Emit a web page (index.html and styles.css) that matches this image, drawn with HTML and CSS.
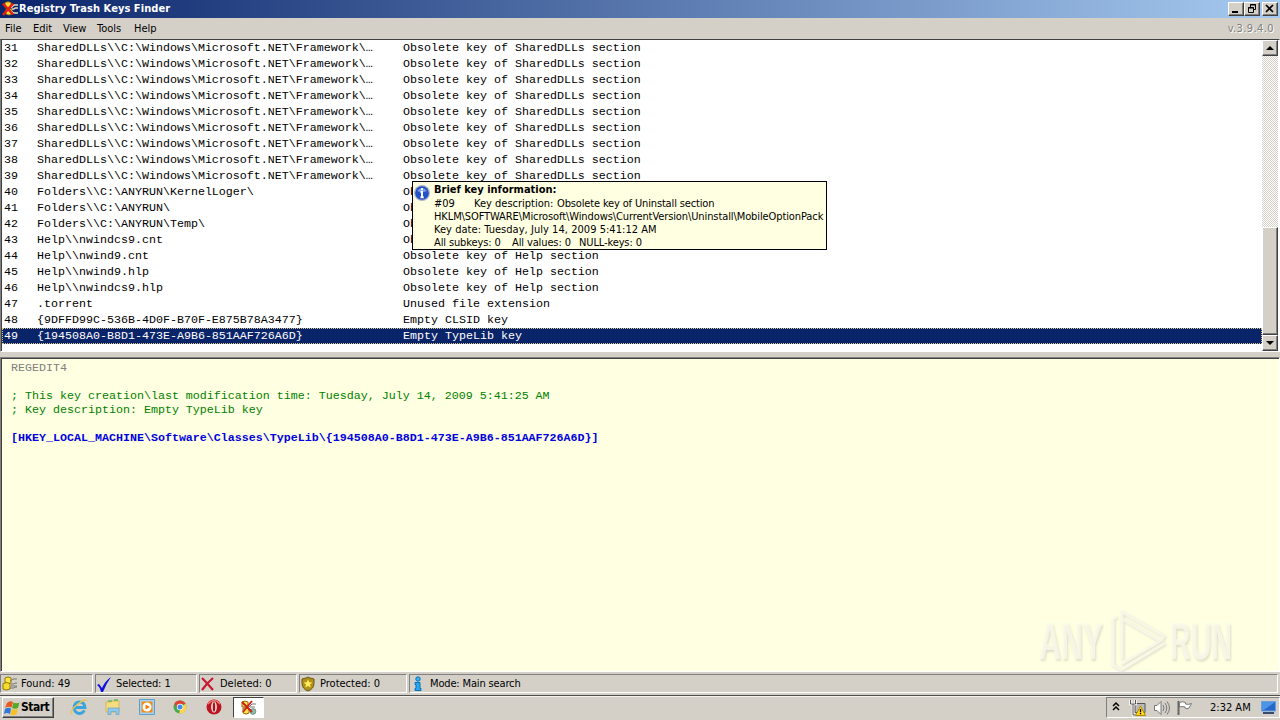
FILE: index.html
```html
<!DOCTYPE html>
<html lang="en">
<head>
<meta charset="utf-8">
<title>Registry Trash Keys Finder</title>
<link rel="stylesheet" href="styles.css">
</head>
<body>
<svg class="defs" width="0" height="0" aria-hidden="true">
  <symbol id="app" viewBox="0 0 16 16">
    <path d="M3 1.500q3-1.500 6 0v5H3zM4 8h6v5q-3 2-6 0z" fill="#ffd83c" stroke="#8a6800" stroke-width=".8"/>
    <path d="M9 7l3-3h4M10 8h2l1-1h3M9 10l3 2h4" fill="none" stroke="#e8dcc0" stroke-width="1.300"/>
    <path d="M1 2.500l10 11M11 2.500L1 14" stroke="#e02010" stroke-width="2.600"/>
  </symbol>
</svg>
<div class="window">
  <header class="titlebar">
    <svg class="app-icon" width="16" height="16"><use href="#app"/></svg>
    <h1 class="title">Registry Trash Keys Finder</h1>
    <div class="controls">
      <span class="ctl"><svg width="14" height="12"><path d="M3 9h6" stroke="#000" stroke-width="2"/></svg></span>
      <span class="ctl"><svg width="14" height="12"><path d="M5.500 4V1.500h5v5H9M5 2h6M3.500 4.500h5v5h-5zM3 5h6" fill="none" stroke="#000"/></svg></span>
      <span class="ctl ctl-close"><svg width="14" height="12"><path d="M3 2l7 7M10 2L3 9" stroke="#000" stroke-width="1.700"/></svg></span>
    </div>
  </header>
  <nav class="menu">
    <span class="m-file">File</span><span class="m-edit">Edit</span><span class="m-view">View</span><span class="m-tools">Tools</span><span class="m-help">Help</span>
    <span class="version">v.3.9.4.0</span>
  </nav>
  <main class="list">
    <div class="rows" id="rows">
      <div class="row"><span>31</span><span>SharedDLLs\\C:\Windows\Microsoft.NET\Framework\<i>…</i></span><span>Obsolete key of SharedDLLs section</span></div>
      <div class="row"><span>32</span><span>SharedDLLs\\C:\Windows\Microsoft.NET\Framework\<i>…</i></span><span>Obsolete key of SharedDLLs section</span></div>
      <div class="row"><span>33</span><span>SharedDLLs\\C:\Windows\Microsoft.NET\Framework\<i>…</i></span><span>Obsolete key of SharedDLLs section</span></div>
      <div class="row"><span>34</span><span>SharedDLLs\\C:\Windows\Microsoft.NET\Framework\<i>…</i></span><span>Obsolete key of SharedDLLs section</span></div>
      <div class="row"><span>35</span><span>SharedDLLs\\C:\Windows\Microsoft.NET\Framework\<i>…</i></span><span>Obsolete key of SharedDLLs section</span></div>
      <div class="row"><span>36</span><span>SharedDLLs\\C:\Windows\Microsoft.NET\Framework\<i>…</i></span><span>Obsolete key of SharedDLLs section</span></div>
      <div class="row"><span>37</span><span>SharedDLLs\\C:\Windows\Microsoft.NET\Framework\<i>…</i></span><span>Obsolete key of SharedDLLs section</span></div>
      <div class="row"><span>38</span><span>SharedDLLs\\C:\Windows\Microsoft.NET\Framework\<i>…</i></span><span>Obsolete key of SharedDLLs section</span></div>
      <div class="row"><span>39</span><span>SharedDLLs\\C:\Windows\Microsoft.NET\Framework\<i>…</i></span><span>Obsolete key of SharedDLLs section</span></div>
      <div class="row"><span>40</span><span>Folders\\C:\ANYRUN\KernelLoger\</span><span>Ob</span></div>
      <div class="row"><span>41</span><span>Folders\\C:\ANYRUN\</span><span>Ob</span></div>
      <div class="row"><span>42</span><span>Folders\\C:\ANYRUN\Temp\</span><span>Ob</span></div>
      <div class="row"><span>43</span><span>Help\\nwindcs9.cnt</span><span>Ob</span></div>
      <div class="row"><span>44</span><span>Help\\nwind9.cnt</span><span>Obsolete key of Help section</span></div>
      <div class="row"><span>45</span><span>Help\\nwind9.hlp</span><span>Obsolete key of Help section</span></div>
      <div class="row"><span>46</span><span>Help\\nwindcs9.hlp</span><span>Obsolete key of Help section</span></div>
      <div class="row"><span>47</span><span>.torrent</span><span>Unused file extension</span></div>
      <div class="row"><span>48</span><span>{9DFFD99C-536B-4D0F-B70F-E875B78A3477}</span><span>Empty CLSID key</span></div>
      <div class="row selected"><span>49</span><span>{194508A0-B8D1-473E-A9B6-851AAF726A6D}</span><span>Empty TypeLib key</span></div>
    </div>
    <div class="scrollbar">
      <span class="sbtn"><svg width="12" height="12"><path d="M2 8h8L6 4z"/></svg></span>
      <span class="track"></span>
      <span class="thumb"></span>
      <span class="sbtn"><svg width="12" height="12"><path d="M2 4h8L6 8z"/></svg></span>
    </div>
    <aside class="tooltip">
      <svg class="tip-icon" width="16" height="16"><circle cx="8" cy="8" r="8" fill="#a9b4c4"/><circle cx="8" cy="8" r="6.800" fill="#2450c8"/><path d="M3 6q5-6 10 0-5 2-10 0" fill="#7ba0ee"/><path d="M8 3v2.200M6.500 7H8v5M6.500 12.300h3.200" stroke="#fff" stroke-width="1.900" fill="none"/></svg>
      <div class="tip-text">
        <b class="t1">Brief key information:</b>
        <p class="t2"><span class="t2a">#09</span><span class="t2b">Key description:</span><span class="t2c">Obsolete key of Uninstall section</span></p>
        <p class="t3">HKLM\SOFTWARE\Microsoft\Windows\CurrentVersion\Uninstall\MobileOptionPack</p>
        <p class="t4">Key date: Tuesday, July 14, 2009 5:41:12 AM</p>
        <p class="t5"><span class="t5a">All subkeys: 0</span><span class="t5b">All values: 0</span><span>NULL-keys: 0</span></p>
      </div>
    </aside>
  </main>
  <section class="memo">
<pre><span class="gray">REGEDIT4</span>

<span class="green">; This key creation\last modification time: Tuesday, July 14, 2009 5:41:25 AM
; Key description: Empty TypeLib key</span>

<span class="blue">[HKEY_LOCAL_MACHINE\Software\Classes\TypeLib\{194508A0-B8D1-473E-A9B6-851AAF726A6D}]</span></pre>
    <svg class="watermark" width="200" height="64" viewBox="0 0 200 64">
      <g class="wm-shadow"><text x="3" y="53" textLength="64" lengthAdjust="spacingAndGlyphs">ANY</text><text x="134" y="53" textLength="62" lengthAdjust="spacingAndGlyphs">RUN</text><path d="M81 10l-4 2v46l8 5 44-27M86 52V5l42 24-3 5M86 12l38 22-39 23"/></g>
      <g class="wm-face"><text x="2" y="51" textLength="64" lengthAdjust="spacingAndGlyphs">ANY</text><text x="133" y="51" textLength="62" lengthAdjust="spacingAndGlyphs">RUN</text><path d="M80 9l-4 2v46l8 5 44-27M85 51V4l42 24-3 5M85 11l38 22-39 23"/></g>
    </svg>
  </section>
  <footer class="status">
    <span class="pane p1"><svg width="17" height="16"><path d="M4 2q3-2 6 0v5q-3 1.500-6 0z" fill="#ffe640" stroke="#967800"/><path d="M2 7.500q4-2 7 0V13q-4 2-7 0z" fill="#f5dc30" stroke="#967800"/><path d="M9 5l3-2h4M10 8h3l1-1h2M9 12h4l1-1h2M10 10h6" stroke="#777" fill="none"/></svg><span>Found: 49</span></span>
    <span class="pane p2"><svg width="17" height="16"><path d="M1 9l2-1 3 4Q9 5 15 1 10 8 7 16H5Q4 11 1 9z" fill="#1010e0"/></svg><span class="tight">Selected: 1</span></span>
    <span class="pane p3"><svg width="17" height="16"><path d="M2 2q5 5 11 12M13 2Q7 7 2 14" fill="none" stroke="#c81832" stroke-width="2.200"/></svg><span>Deleted: 0</span></span>
    <span class="pane p4"><svg width="17" height="16"><path d="M8 1l2 1 4 1v4q0 6-6 8-6-2-6-8V3l4-1z" fill="#b09018" stroke="#6d5a18"/><path d="M8 3.500l1.300 2.700 3 .3L10 8.500l.7 3L8 10l-2.700 1.500.7-3-2.300-2 3-.3z" fill="#ffec60"/></svg><span>Protected: 0</span></span>
    <span class="pane p5"><svg width="17" height="16"><circle cx="8" cy="3" r="2.200" fill="#38b4f8" stroke="#0870b8"/><path d="M5 6.500h5v6h1v2H5v-2h1v-4H5z" fill="#28a8f0" stroke="#0870b8"/></svg><span class="tight2">Mode: Main search</span></span>
  </footer>
</div>
<div class="taskbar">
  <div class="start"><svg width="17" height="16"><path d="M3 3q3-3 6-1L7.500 7.500Q4 6 1 8z" fill="#e85820"/><path d="M9.500 2.500q3 1.500 6 0L14 8q-3 1.500-6 0z" fill="#58a828"/><path d="M1 9q3-2 6-.5L6 14q-3-2-6 0z" fill="#3078d8"/><path d="M8 9q3 1.500 6 0l-1.500 5.500q-3 1.500-6 0z" fill="#f8c020"/></svg><b>Start</b></div>
  <div class="quick">
    <svg width="18" height="18"><path d="M4 9.500h11Q14.500 4 9.500 4T4 10q1 5.500 5.500 5.500 3 0 5-3" fill="none" stroke="#3aa5dc" stroke-width="2.800"/><path d="M2 16Q-1 13 8 6 16 0 16.500 3" fill="none" stroke="#ecc44a" stroke-width="1.400"/></svg>
    <svg width="18" height="18"><path d="M2 4h5l1-1h7v11H2z" fill="#f4dc80" stroke="#d9b550"/><path d="M4 3h4M10 2h4" stroke="#67b960" stroke-width="1.500"/><path d="M4 16.500V10h11v6.500h-3v-3H7v3z" fill="#8dc8ee" stroke="#5a9cc8" stroke-width=".6"/></svg>
    <svg width="18" height="18"><path d="M1.500 1.500h15v15h-15z" fill="#a5d4f1" stroke="#5b9fcb"/><path d="M3.500 3.500h11v11h-11z" fill="#f28b1c"/><circle cx="9" cy="9" r="4.500" fill="#fff"/><path d="M7.500 6.500v5L12 9z" fill="#f07c10"/></svg>
    <svg width="18" height="18"><circle cx="9" cy="9" r="6.500" fill="#49a84c"/><path d="M14.600 5.700A6.500 6.500 0 0 1 8 15.500L10 9z" fill="#ffd34b"/><path d="M3.400 5.700L7 11l2-5h5.700Q13 2.500 9 2.500T3.400 5.700z" fill="#de4434"/><circle cx="9" cy="9" r="3.200" fill="#fff"/><circle cx="9" cy="9" r="2.500" fill="#4688f1"/></svg>
    <svg width="18" height="18"><ellipse cx="9" cy="9" rx="7.500" ry="7.500" fill="#bd1420"/><path d="M3 6q6-7 12 0" fill="none" stroke="#e87870" stroke-width="1.500"/><ellipse cx="9" cy="9" rx="2.900" ry="5.500" fill="#e9e0dc"/><ellipse cx="9" cy="9" rx="1.200" ry="4.800" fill="#a8101a"/></svg>
  </div>
  <div class="task"><svg width="18" height="18"><path d="M2 3q3-2 6 0v5H2zM3 9h6v5q-3 2-6 0z" fill="#ffe14a" stroke="#93640c"/><path d="M9 8l3-3h4M10 8h5M9 10l4 1h3" fill="none" stroke="#777"/><circle cx="13" cy="12.500" r="2.800" fill="#8fbfa8" stroke="#6d8f80"/><path d="M2 3l10 10M12 2L3 13" stroke="#d21b14" stroke-width="1.800"/></svg></div>
  <div class="tray">
    <svg width="12" height="18"><path d="M3 7l3-3 3 3M3 11l3-3 3 3" fill="none" stroke="#000" stroke-width="1.500"/></svg>
    <svg class="net" width="18" height="18"><path d="M6 4.500h10v9H6z" fill="#b9b9b9" stroke="#555"/><path d="M1.500 1v4h5V1M4 5v11h4" fill="none" stroke="#fff" stroke-width="2.500"/><path d="M1.500 1v4h5V1M4 5v11h5" fill="none" stroke="#555"/><path d="M11.500 7l5 9.500h-10z" fill="#ffd920" stroke="#b48a00"/><path d="M11.500 10v3.300M11.500 14v1.300" stroke="#000" stroke-width="1.300"/></svg>
    <svg class="vol" width="18" height="18"><path d="M1.500 6.500H4L8 2.500v13l-4-4H1.500z" fill="#fff" stroke="#777"/><path d="M10 6q2 3 0 6M12 4q3.500 5 0 10M14 2.500q5 6.500 0 13" fill="none" stroke="#777"/></svg>
    <svg class="flag" width="18" height="18"><path d="M2.500 2v14" stroke="#666" stroke-width="2"/><path d="M3.500 3.500q3-1.500 6 0v1.500q3 1 6-.5L13 9q-2 1.500-4 0V8q-3-1-5.500 0z" fill="#fff" stroke="#777"/></svg>
    <span class="clock">2:32 AM</span>
    <svg class="desk" width="15" height="14"><path d="M.5.500h14v9.500H.5z" fill="#2468c8" stroke="#6b9ddd"/><path d="M1 1h13L3 9H1z" fill="#4c94e5"/><path d="M2 12h11" stroke="#344c70" stroke-width="2"/></svg>
  </div>
</div>
</body>
</html>
```

FILE: styles.css
```css
* { box-sizing: border-box; }
body {
  margin: 0; width: 1280px; height: 720px; overflow: hidden;
  display: flex; flex-direction: column;
  background: #d4d0c8; color: #000;
  font: 11px/13px "DejaVu Sans Condensed", "DejaVu Sans", sans-serif;
  font-stretch: condensed; white-space: nowrap;
}
svg { display: block; flex: none; }
.defs { position: absolute; }
p { margin: 0; }
.window { height: 695px; display: flex; flex-direction: column; }
.titlebar { height: 18px; display: flex; align-items: center; padding: 0 2px; background: linear-gradient(90deg, #0a246a, #a6caf0); color: #fff; }
.title { margin: 0 0 0 1px; font-size: 11px; line-height: 18px; flex: 1; letter-spacing: .06px; }
.controls { display: flex; }
.ctl, .sbtn, .thumb, .start { background: #d4d0c8; border: 1px solid; border-color: #fff #404040 #404040 #fff; box-shadow: inset -1px -1px #808080; }
.ctl { width: 16px; height: 14px; }
.ctl-close { margin-left: 2px; }
.menu { height: 21px; padding: 0 6px 0 5px; display: flex; line-height: 21px; }
.m-file { width: 28px; } .m-edit { width: 30px; } .m-view { width: 34px; } .m-tools { width: 37px; }
.version { margin-left: auto; color: #808080; text-shadow: 1px 1px #fff; letter-spacing: .4px; }
.list { position: relative; height: 313px; display: flex; background: #fff; border: 1px solid; border-color: #404040 #fff #fff #808080; box-shadow: inset 1px 0 #404040; }
.rows { flex: 1; padding-left: 1px; font: 11.667px/16px "Liberation Mono", monospace; }
.row { height: 16px; display: grid; grid-template-columns: 33px 366px 1fr; padding-left: 2px; background: #fff; }
.row span { white-space: pre; }
.row i { font-style: normal; }
.selected { background: #0a246a; color: #fff; outline: 1px dotted #d9c58a; outline-offset: -1px; }
.scrollbar { width: 17px; display: flex; flex-direction: column; padding-right: 1px; }
.sbtn { height: 16px; padding: 1px; }
.track { height: 171px; background: repeating-conic-gradient(#fff 0 25%, #d4d0c8 0 50%) 0 0/2px 2px; }
.thumb { flex: 1; }
.tooltip { position: absolute; left: 411px; top: 141px; width: 415px; height: 69px; display: flex; background: #ffffe1; border: 1px solid #000; }
.tip-icon { margin: 3px 0 0 1px; }
.tip-text { margin-left: 4px; }
.t1 { display: block; line-height: 15px; }
.t2 { display: flex; }
.t2a { width: 40px; } .t2b { width: 83px; } .t2c { letter-spacing: -.15px; }
.t3 { letter-spacing: -.1px; } .t4 { letter-spacing: .04px; }
.t5 { display: flex; letter-spacing: -.12px; } .t5a { width: 78px; } .t5b { width: 67px; }
.memo { position: relative; margin-top: 5px; height: 315px; background: #ffffe1; border: 1px solid; border-color: #808080 #fff #fff #808080; box-shadow: inset 1px 1px #404040; padding: 3px 0 0 10px; }
pre { margin: 0; font: 11.667px/14px "Liberation Mono", monospace; }
.gray { color: #808080; } .green { color: #008000; } .blue { color: #0000e0; font-weight: bold; }
.watermark { position: absolute; right: 42px; bottom: -1px; overflow: visible; }
.watermark text { font: bold 51px "Liberation Sans", sans-serif; stroke: none; }
.watermark path { fill: none; stroke-width: 3; }
.wm-shadow { fill: #d8d8c4; stroke: #d8d8c4; opacity: .85; filter: blur(1px); }
.wm-face { fill: #fbfbee; stroke: #fbfbee; opacity: .8; }
.status { height: 23px; padding-top: 2px; display: flex; }
.pane { height: 19px; display: flex; align-items: center; border: 1px solid; border-color: #808080 #fff #fff #808080; margin-right: 2px; }
.p1 { width: 93px; } .p2 { width: 102px; } .p3 { width: 98px; } .p4 { width: 108px; } .p5 { flex: 1; }
.pane span { margin-left: 3px; }
.pane .tight { letter-spacing: -.1px; } .pane .tight2 { letter-spacing: -.15px; }
.taskbar { height: 25px; border-top: 1px solid #505050; box-shadow: inset 0 1px #f4f2ec; padding: 1px 0 2px 2px; display: flex; }
.start { width: 52px; height: 21px; display: flex; align-items: center; padding-left: 1px; font-size: 12px; letter-spacing: -.5px; }
.quick { display: flex; gap: 15.750px; margin: 1px 0 0 16px; }
.task { width: 31px; height: 21px; margin-left: 10px; background: #fff; border: 1px solid; border-color: #404040 #fff #fff #404040; padding: 1px 0 0 6px; }
.tray { margin-left: auto; width: 174px; height: 21px; display: flex; align-items: center; border: 1px solid; border-color: #808080 #fff #fff #808080; padding-left: 3px; }
.net { margin-left: 7px; } .vol { margin-left: 6px; } .flag { margin-left: 5px; }
.clock { width: 51px; margin-left: 16px; }
```
